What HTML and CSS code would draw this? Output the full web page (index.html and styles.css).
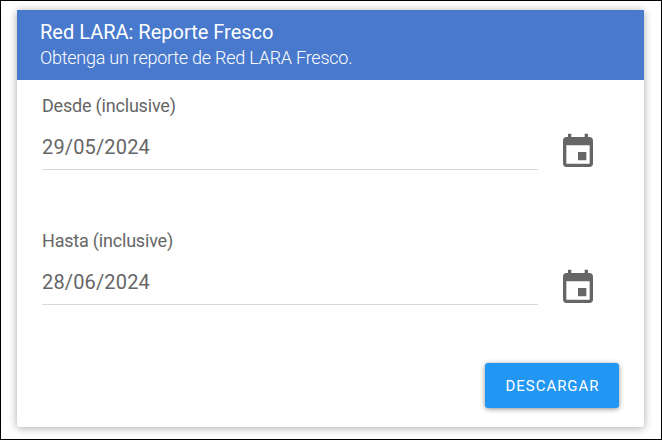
FILE: index.html
```html
<!DOCTYPE html>
<html lang="es">
<head>
    <meta charset="UTF-8">
    <meta name="viewport" content="width=device-width, initial-scale=1.0">
    <title>Red LARA: Reporte Fresco</title>
    <link rel="stylesheet" href="styles.css">
</head>
<body>
    <div class="card">
        <div class="card-header">
            <h1>Red LARA: Reporte Fresco</h1>
            <p>Obtenga un reporte de Red LARA Fresco.</p>
        </div>
        <form class="card-body">
            <div class="field">
                <div class="field-text">
                    <label for="desde">Desde (inclusive)</label>
                    <input type="text" id="desde" value="29/05/2024">
                </div>
                <svg class="calendar-icon" viewBox="0 0 24 24"><path d="M17 12h-5v5h5v-5zM16 1v2H8V1H6v2H5c-1.11 0-1.99.9-1.99 2L3 19c0 1.1.89 2 2 2h14c1.1 0 2-.9 2-2V5c0-1.1-.9-2-2-2h-1V1h-2zm3 18H5V8h14v11z"/></svg>
            </div>
            <div class="field">
                <div class="field-text">
                    <label for="hasta">Hasta (inclusive)</label>
                    <input type="text" id="hasta" value="28/06/2024">
                </div>
                <svg class="calendar-icon" viewBox="0 0 24 24"><path d="M17 12h-5v5h5v-5zM16 1v2H8V1H6v2H5c-1.11 0-1.99.9-1.99 2L3 19c0 1.1.89 2 2 2h14c1.1 0 2-.9 2-2V5c0-1.1-.9-2-2-2h-1V1h-2zm3 18H5V8h14v11z"/></svg>
            </div>
            <div class="actions">
                <button type="button" class="download">Descargar</button>
            </div>
        </form>
    </div>
</body>
</html>
```
FILE: styles.css
```css
* {
    box-sizing: border-box;
}
body {
    margin: 0;
    height: 440px;
    padding: 9px 17px 12px 16px;
    border: 1px solid #000;
    background: #fff;
    font-family: Roboto, sans-serif;
    color: #666;
    overflow: hidden;
}
.card {
    height: 417px;
    background: #fff;
    border-radius: 3px;
    box-shadow: 0 1px 8px rgba(0, 0, 0, 0.35);
}
.card-header {
    height: 70px;
    padding: 10px 23px;
    background: #4879cd;
    color: #fff;
}
.card-header h1 {
    margin: 0;
    font-size: 20px;
    font-weight: 400;
    line-height: 25px;
}
.card-header p {
    margin: 0;
    font-size: 18px;
    font-weight: 300;
    line-height: 26px;
    letter-spacing: -0.24px;
}
.card-body {
    padding: 14px 25px 0;
}
.field {
    display: flex;
    height: 135px;
}
.field + .field .calendar-icon {
    margin-top: 39px;
}
.field-text {
    width: 496px;
}
.field label {
    display: block;
    font-size: 18px;
    line-height: 24px;
    letter-spacing: -0.2px;
}
.field input {
    display: block;
    width: 100%;
    height: 52px;
    margin: 0;
    padding: 6px 0 0;
    border: none;
    border-bottom: 1px solid #d8d8d8;
    outline: none;
    background: none;
    font-family: inherit;
    font-size: 20px;
    letter-spacing: 0.15px;
    color: #666;
}
.calendar-icon {
    width: 40px;
    height: 40px;
    margin: 38px 0 0 20px;
    fill: #666;
}
.actions {
    display: flex;
    justify-content: flex-end;
    margin-top: -1px;
}
.download {
    width: 134px;
    height: 45px;
    padding: 0 0 0 1px;
    border: none;
    border-radius: 3px;
    background: #2196f3;
    box-shadow: 0 1px 5px rgba(0, 0, 0, 0.45);
    color: #fff;
    font-family: inherit;
    font-size: 15px;
    font-weight: 400;
    letter-spacing: 0.95px;
    text-transform: uppercase;
}
```
